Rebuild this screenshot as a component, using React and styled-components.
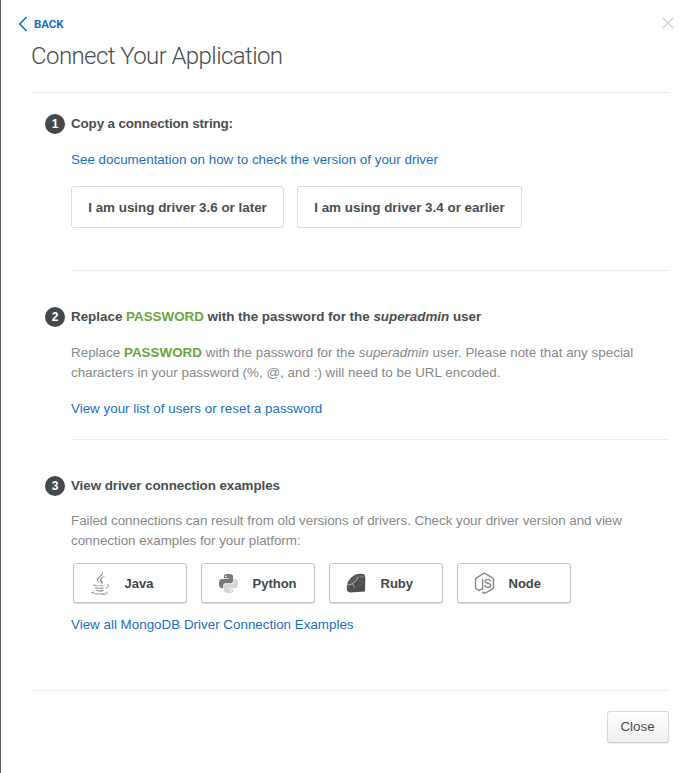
import React from 'react';
import styled, { createGlobalStyle } from 'styled-components';
import { FaJava } from 'react-icons/fa';

const GlobalStyle = createGlobalStyle`
  * { box-sizing: border-box; }
  body { margin: 0; background: #fff; }
  button { font-family: inherit; cursor: pointer; }
`;

const Modal = styled.main`
  width: 696px;
  height: 773px;
  padding: 14px 27px 0 30px;
  border-left: 1px solid #5c5f60;
  background: #fff;
  color: #494e50;
  font: 13.4px/20px "Liberation Sans", Arial, sans-serif;
`;

const TopBar = styled.div`
  display: flex;
  justify-content: space-between;
  height: 20px;
  margin: 0 -5px 0 -13px;
`;

const BackLink = styled.a`
  display: flex;
  align-items: center;
  gap: 6px;
  color: #1a6fc0;
  font: bold 11.5px/20px Roboto, sans-serif;
  letter-spacing: -0.1px;
`;

const DismissButton = styled.button`
  display: flex;
  align-items: center;
  height: 18px;
  padding: 0;
  border: 0;
  background: none;
  color: #d3d6d6;
`;

const Title = styled.h1`
  height: 59px;
  margin: 0;
  border-bottom: 1px solid #ebeded;
  color: #494e50;
  font: 300 24px/44px Roboto, sans-serif;
  letter-spacing: -0.58px;
`;

const Step = styled.section`
  display: grid;
  grid-template-columns: 20px 1fr;
  column-gap: 6px;
  height: ${p => p.$height}px;
  padding: ${p => p.$top}px 0 0 14px;
`;

const StepNumber = styled.span`
  display: flex;
  align-items: center;
  justify-content: center;
  width: 20px;
  height: 20px;
  border-radius: 50%;
  background: #43484a;
  color: #fff;
  font-size: 12px;
  font-weight: bold;
`;

const StepBody = styled.div`
  display: flex;
  flex-direction: column;
  align-items: stretch;
  border-bottom: ${p => (p.$divided ? '1px solid #ebeded' : '0')};
`;

const StepTitle = styled.h2`
  margin: 0 0 ${p => p.$gap || 16}px;
  font-size: inherit;
  font-weight: bold;
  line-height: 20px;
  letter-spacing: ${p => p.$tracking}px;
  white-space: nowrap;
`;

const Text = styled.p`
  margin: 0;
  color: #87898a;
  letter-spacing: ${p => p.$tracking}px;
  white-space: nowrap;
`;

const Keyword = styled.strong`
  color: #6ba442;
`;

const TextLink = styled.a`
  align-self: flex-start;
  margin-top: ${p => p.$top || 0}px;
  color: #1a6fc0;
  white-space: nowrap;
`;

const VersionButtons = styled.div`
  display: flex;
  gap: 13px;
  margin-top: 16px;
`;

const VersionButton = styled.button`
  width: ${p => p.$width}px;
  height: 42px;
  padding: 0;
  border: 1px solid #d9dddd;
  border-radius: 3px;
  background: #fff;
  color: #494e50;
  font-size: 13.4px;
  font-weight: bold;
`;

const DriverButtons = styled.div`
  display: flex;
  gap: 14px;
  margin: 12px 0 12px 2px;
`;

const DriverButton = styled.button`
  display: flex;
  align-items: center;
  width: 114px;
  height: 40px;
  padding: 0 0 0 14px;
  border: 1px solid #c5c7c8;
  border-radius: 3px;
  background: #fff;
  box-shadow: 0 1px 1px rgba(0, 0, 0, 0.14);
  color: #42474a;
  font-size: 13px;
  font-weight: bold;
`;

const DriverIcon = styled.span`
  display: flex;
  justify-content: center;
  width: 24px;
  margin-right: 12.5px;
  color: #818384;
`;

const Footer = styled.footer`
  display: flex;
  justify-content: flex-end;
  padding-top: 20px;
  border-top: 1px solid #ebeded;
`;

const CloseButton = styled.button`
  width: 62px;
  height: 32px;
  padding: 0 1px 2px 0;
  border: 1px solid #d5d9d9;
  border-bottom-color: #c8cccc;
  border-radius: 3px;
  background: linear-gradient(#fff, #f0f0f0);
  box-shadow: 0 1px 1px rgba(0, 0, 0, 0.08);
  color: #494e50;
  font-size: 13.4px;
`;

function PythonIcon() {
  return (
    <svg width="19" height="19" viewBox="0 0 24 24">
      <path
        fill="#77797a"
        d="M14.25.18l.9.2.73.26.59.3.45.32.34.34.25.34.16.33.1.3.04.26.02.2-.01.13V8.5l-.05.63-.13.55-.21.46-.26.38-.3.31-.33.25-.35.19-.35.14-.33.1-.3.07-.26.04-.21.02H8.77l-.69.05-.59.14-.5.22-.41.27-.33.32-.27.35-.2.36-.15.37-.1.35-.07.32-.04.27-.02.21v3.06H3.17l-.21-.03-.28-.07-.32-.12-.35-.18-.36-.26-.36-.36-.35-.46-.32-.59-.28-.73-.21-.88-.14-1.05-.05-1.23.06-1.22.16-1.04.24-.87.32-.71.36-.57.4-.44.42-.33.42-.24.4-.16.36-.1.32-.05.24-.01h.16l.06.01h8.16v-.83H6.18l-.01-2.75-.02-.37.05-.34.11-.31.17-.28.25-.26.31-.23.38-.2.44-.18.51-.15.58-.12.64-.1.71-.06.77-.04.84-.02 1.27.05zm-6.3 1.98l-.23.33-.08.41.08.41.23.34.33.22.41.09.41-.09.33-.22.23-.34.08-.41-.08-.41-.23-.33-.33-.22-.41-.09-.41.09z"
      />
      <path
        fill="#d5d6d6"
        d="M21.04 6.11l.28.06.32.12.35.18.36.27.36.35.35.47.32.59.28.73.21.88.14 1.04.05 1.23-.06 1.23-.16 1.04-.24.86-.32.71-.36.57-.4.45-.42.33-.42.24-.4.16-.36.09-.32.05-.24.02-.16-.01h-8.22v.82h5.84l.01 2.76.02.36-.05.34-.11.31-.17.29-.25.25-.31.24-.38.2-.44.17-.51.15-.58.13-.64.09-.71.07-.77.04-.84.01-1.27-.04-1.07-.14-.9-.2-.73-.25-.59-.3-.45-.33-.34-.34-.25-.34-.16-.33-.1-.3-.04-.25-.02-.2.01-.13v-5.34l.05-.64.13-.54.21-.46.26-.38.3-.32.33-.24.35-.2.35-.14.33-.1.3-.06.26-.04.21-.02.13-.01h5.84l.69-.05.59-.14.5-.21.41-.28.33-.32.27-.35.2-.36.15-.36.1-.35.07-.32.04-.28.02-.21V6.07h2.09zm-6.47 14.32l-.23.33-.08.41.08.41.23.33.33.23.41.08.41-.08.33-.23.23-.33.08-.41-.08-.41-.23-.33-.33-.23-.41-.08-.41.08z"
      />
    </svg>
  );
}

function RubyIcon() {
  return (
    <svg width="20" height="20" viewBox="0 0 20 20">
      <path fill="#4b4c4e" d="M.8 13.2 2 8.8 5.2 4.4 9.5 1.4 14 .8l4.4.4.9 4-.3 13.4-15 .9L1.2 18Z" />
      <path fill="#5c5d5f" d="M2.2 10.6C2 7.8 7.4 2.7 11 2.2c2.4-.3 2.2 2.2.4 4.4-2.2 2.6-6.2 4.9-8.6 4.6Z" />
      <path fill="none" stroke="#b9babb" strokeWidth="1" d="M1.6 11.9c3.6.4 9.2-3.2 10.8-8.2M6.4 10.4l1.8 3.4" />
      <path fill="none" stroke="#6c6d6e" strokeWidth=".6" d="m8.2 13.8 2.6 4.4M12 7.4l5.8 2.8-9.2 4.2M2.2 13l2 5.4 4-4.6" />
      <path fill="#6d6e70" d="m13.4 2.3 4.2-.1.7 2.6-4.5.2Z" />
    </svg>
  );
}

function NodeIcon() {
  return (
    <svg width="21" height="23" viewBox="0 0 22 24" fill="none" stroke="#88898a" strokeWidth="1.5" strokeLinejoin="round">
      <path d="m6.3 19.7-4.2-2.4a1 1 0 0 1-.5-.9V7.2a1 1 0 0 1 .5-.9l8.4-4.8a1 1 0 0 1 1 0l8.4 4.8a1 1 0 0 1 .5.9v9.2a1 1 0 0 1-.5.9l-8.4 4.8a1 1 0 0 1-1 0l-2-1.1" />
      <path d="M9 7.4v8.9q0 2.1-1.7 2.1-.8 0-1.5-.5" />
      <path d="M17.2 9.8C17 8.3 16.1 7.7 14.4 7.7c-1.7 0-2.8.7-2.8 2 0 3 5.9 1.2 5.9 4.2 0 1.5-1.2 2.2-3.1 2.2-2 0-3-.8-3.1-2.5" />
    </svg>
  );
}

const drivers = [
  { name: 'Java', icon: <FaJava size={24} /> },
  { name: 'Python', icon: <PythonIcon /> },
  { name: 'Ruby', icon: <RubyIcon /> },
  { name: 'Node', icon: <NodeIcon /> },
];

export default function App() {
  return (
    <>
      <GlobalStyle />
      <Modal>
        <TopBar>
          <BackLink>
            <svg width="10" height="16" viewBox="0 0 10 16" fill="none" stroke="currentColor" strokeWidth="1.6">
              <path d="M8.5 1 1.8 8l6.7 7" />
            </svg>
            BACK
          </BackLink>
          <DismissButton aria-label="Close">
            <svg width="12" height="12" viewBox="0 0 12 12" stroke="currentColor" strokeWidth="1.5">
              <path d="m.7.7 10.6 10.6M11.3.7.7 11.3" />
            </svg>
          </DismissButton>
        </TopBar>
        <Title>Connect Your Application</Title>

        <Step $height={178} $top={21}>
          <StepNumber>1</StepNumber>
          <StepBody $divided>
            <StepTitle $tracking={-0.13}>Copy a connection string:</StepTitle>
            <TextLink>See documentation on how to check the version of your driver</TextLink>
            <VersionButtons>
              <VersionButton $width={213}>I am using driver 3.6 or later</VersionButton>
              <VersionButton $width={225}>I am using driver 3.4 or earlier</VersionButton>
            </VersionButtons>
          </StepBody>
        </Step>

        <Step $height={169} $top={36}>
          <StepNumber>2</StepNumber>
          <StepBody $divided>
            <StepTitle $tracking={-0.005}>
              Replace <Keyword>PASSWORD</Keyword> with the password for the <em>superadmin</em> user
            </StepTitle>
            <Text $tracking={0.015}>
              Replace <Keyword>PASSWORD</Keyword> with the password for the <em>superadmin</em> user. Please note that any special
              <br />
              characters in your password (%, @, and :) will need to be URL encoded.
            </Text>
            <TextLink $top={16}>View your list of users or reset a password</TextLink>
          </StepBody>
        </Step>

        <Step $height={250} $top={36}>
          <StepNumber>3</StepNumber>
          <StepBody>
            <StepTitle $tracking={-0.07} $gap={15}>View driver connection examples</StepTitle>
            <Text $tracking={-0.03}>
              Failed connections can result from old versions of drivers. Check your driver version and view
              <br />
              connection examples for your platform:
            </Text>
            <DriverButtons>
              {drivers.map(({ name, icon }) => (
                <DriverButton key={name}>
                  <DriverIcon>{icon}</DriverIcon>
                  {name}
                </DriverButton>
              ))}
            </DriverButtons>
            <TextLink>View all MongoDB Driver Connection Examples</TextLink>
          </StepBody>
        </Step>

        <Footer>
          <CloseButton>Close</CloseButton>
        </Footer>
      </Modal>
    </>
  );
}
